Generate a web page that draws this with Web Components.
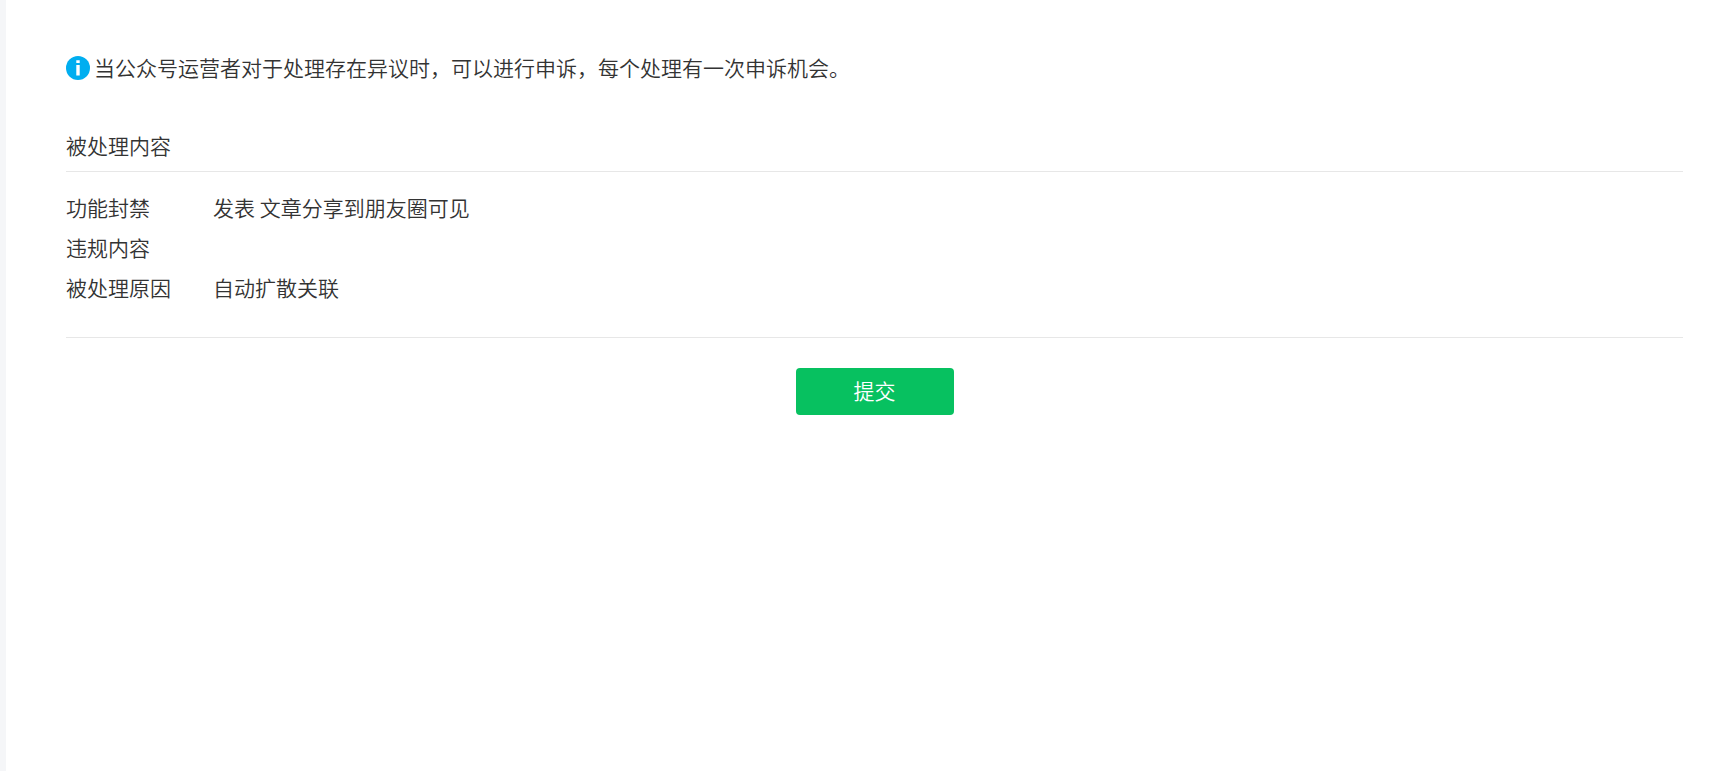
<!DOCTYPE html>
<html lang="zh-CN">
<head>
<meta charset="utf-8">
<meta name="viewport" content="width=device-width, initial-scale=1">
<title>申诉</title>
<style>
  body {
    margin: 0;
    background: #fff;
    color: #333;
    font: 350 21px/40px "Noto Sans CJK SC", sans-serif;
  }
</style>
</head>
<body>
<appeal-page>
  <notice-bar>当公众号运营者对于处理存在异议时，可以进行申诉，每个处理有一次申诉机会。</notice-bar>
  <detail-section heading="被处理内容">
    <detail-row label="功能封禁">发表 文章分享到朋友圈可见</detail-row>
    <detail-row label="违规内容"></detail-row>
    <detail-row label="被处理原因">自动扩散关联</detail-row>
  </detail-section>
  <submit-button>提交</submit-button>
</appeal-page>
<script>
  class BaseElement extends HTMLElement {
    constructor() {
      super();
      this.attachShadow({ mode: "open" }).innerHTML = this.constructor.markup;
    }
  }

  customElements.define("appeal-page", class extends BaseElement {
    static markup = `
      <style>
        :host {
          display: block;
          box-sizing: border-box;
          min-height: 100vh;
          padding: 48px 53px 48px 60px;
          border-left: 6px solid #f5f6f8;
        }
      </style>
      <main><slot></slot></main>`;
  });

  customElements.define("notice-bar", class extends BaseElement {
    static markup = `
      <style>
        :host { display: flex; align-items: center; gap: 4px; }
        svg { flex: none; }
        p { margin: 0; padding-bottom: 2px; line-height: 38px; }
      </style>
      <svg width="24" height="24" viewBox="0 0 24 24" aria-hidden="true">
        <circle cx="12" cy="12" r="12" fill="#00aef0"/>
        <path d="M10.3 4.2h3.4v2.8h-3.4zM10.3 9h3.4v10.6h-3.4z" fill="#fff"/>
      </svg>
      <p><slot></slot></p>`;
  });

  customElements.define("detail-section", class extends BaseElement {
    static markup = `
      <style>
        :host { display: block; margin-top: 37px; border-bottom: 1px solid #e7e7e7; }
        h2 {
          margin: 0;
          padding-bottom: 6px;
          border-bottom: 1px solid #e7e7e7;
          font: inherit;
        }
        div { padding: 15px 0 30px; }
      </style>
      <h2></h2>
      <div><slot></slot></div>`;
    connectedCallback() {
      this.shadowRoot.querySelector("h2").textContent = this.getAttribute("heading");
    }
  });

  customElements.define("detail-row", class extends BaseElement {
    static markup = `
      <style>
        :host { display: block; }
        dl { display: grid; grid-template-columns: 147px 1fr; min-height: 40px; margin: 0; }
        dd { margin: 0; }
      </style>
      <dl><dt></dt><dd><slot></slot></dd></dl>`;
    connectedCallback() {
      this.shadowRoot.querySelector("dt").textContent = this.getAttribute("label");
    }
  });

  customElements.define("submit-button", class extends BaseElement {
    static markup = `
      <style>
        :host { display: flex; justify-content: center; margin-top: 30px; }
        button {
          min-width: 158px;
          height: 47px;
          padding: 0 24px 4px;
          border: 0;
          border-radius: 4px;
          background: #07c160;
          color: #fff;
          font: inherit;
          cursor: pointer;
        }
      </style>
      <button type="button"><slot></slot></button>`;
  });
</script>
</body>
</html>
